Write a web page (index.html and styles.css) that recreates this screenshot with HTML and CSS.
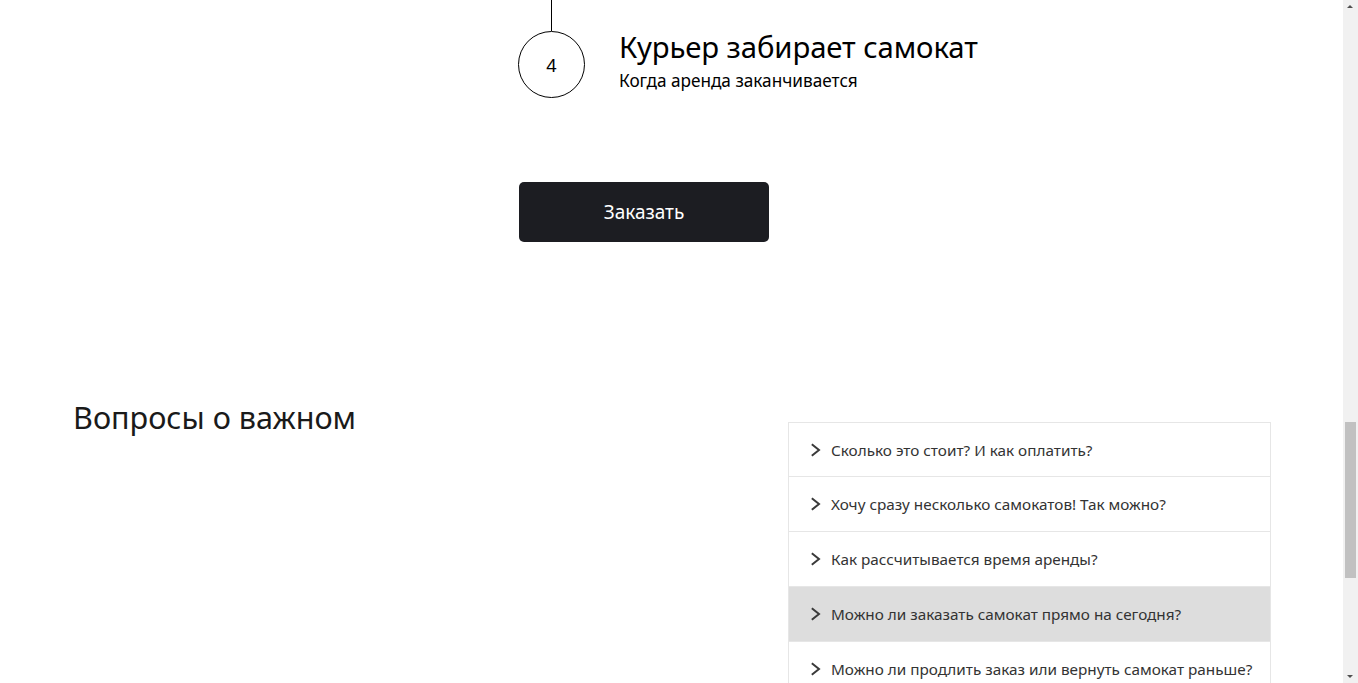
FILE: index.html
```html
<!DOCTYPE html>
<html lang="ru">
<head>
<meta charset="utf-8">
<title>Самокат</title>
<link rel="stylesheet" href="styles.css">
</head>
<body>
<div class="viewport">
  <main class="page">
    <section class="steps">
      <div class="step">
        <div class="step-marker">
          <div class="step-line"></div>
          <div class="step-circle">4</div>
        </div>
        <div class="step-text">
          <h3 class="step-title">Курьер забирает самокат</h3>
          <p class="step-desc">Когда аренда заканчивается</p>
        </div>
      </div>
      <button class="order-btn">Заказать</button>
    </section>
    <section class="faq">
      <h2 class="faq-title">Вопросы о важном</h2>
      <ul class="faq-list">
        <li class="faq-item"><svg class="chev" viewBox="0 0 11 14" width="11" height="14"><path d="M1.8 1.2 L9 7 L1.8 12.8" fill="none" stroke="#3a3a3a" stroke-width="2"/></svg><span>Сколько это стоит? И как оплатить?</span></li>
        <li class="faq-item"><svg class="chev" viewBox="0 0 11 14" width="11" height="14"><path d="M1.8 1.2 L9 7 L1.8 12.8" fill="none" stroke="#3a3a3a" stroke-width="2"/></svg><span>Хочу сразу несколько самокатов! Так можно?</span></li>
        <li class="faq-item"><svg class="chev" viewBox="0 0 11 14" width="11" height="14"><path d="M1.8 1.2 L9 7 L1.8 12.8" fill="none" stroke="#3a3a3a" stroke-width="2"/></svg><span>Как рассчитывается время аренды?</span></li>
        <li class="faq-item faq-item--hover"><svg class="chev" viewBox="0 0 11 14" width="11" height="14"><path d="M1.8 1.2 L9 7 L1.8 12.8" fill="none" stroke="#3a3a3a" stroke-width="2"/></svg><span>Можно ли заказать самокат прямо на сегодня?</span></li>
        <li class="faq-item"><svg class="chev" viewBox="0 0 11 14" width="11" height="14"><path d="M1.8 1.2 L9 7 L1.8 12.8" fill="none" stroke="#3a3a3a" stroke-width="2"/></svg><span>Можно ли продлить заказ или вернуть самокат раньше?</span></li>
      </ul>
    </section>
  </main>
  <div class="scrollbar">
    <div class="sb-arrow sb-up"></div>
    <div class="sb-track"><div class="sb-thumb"></div></div>
    <div class="sb-arrow sb-down"></div>
  </div>
</div>
</body>
</html>
```
FILE: styles.css
```css
* { box-sizing: border-box; }
html, body { margin: 0; padding: 0; height: 100%; overflow: hidden; background: #fff; }
body { font-family: "Noto Sans", "Open Sans", sans-serif; color: #000; }
.viewport { display: flex; height: 683px; }
.page { flex: 1; min-width: 0; overflow: hidden; }
.steps { padding-left: 518px; }
.step { display: flex; }
.step-marker { display: flex; flex-direction: column; align-items: center; width: 67px; }
.step-line { width: 1px; height: 31px; background: #000; }
.step-circle { width: 67px; height: 67px; border: 1px solid #000; border-radius: 50%; display: flex; align-items: center; justify-content: center; font-size: 18px; color: #000; }
.step-text { margin-left: 34px; padding-top: 29px; }
.step-title { margin: 0; font-weight: 400; font-size: 29.3px; line-height: 36px; letter-spacing: -0.1px; }
.step-desc { margin: 3px 0 0; font-size: 17.2px; line-height: 26px; }
.order-btn { display: block; margin: 84px 0 0 1px; width: 250px; height: 60px; border: 0; border-radius: 5px; background: #1c1d22; color: #fff; font-family: inherit; font-size: 19px; }
.faq { display: flex; padding: 180px 0 0 73px; }
.faq-title { margin: -25px 0 0; width: 715px; font-weight: 400; font-size: 30.6px; line-height: 40px; color: #1a1a1a; }
.faq-list { list-style: none; margin: 0; padding: 0; width: 483px; border: 1px solid #e6e6e6; border-bottom: 0; }
.faq-item { display: flex; align-items: center; height: 55px; padding-left: 21px; border-bottom: 1px solid #e6e6e6; font-size: 15.3px; color: #333; white-space: nowrap; }
.faq-item:first-child { height: 54px; }
.faq-item--hover { background: #dddddd; }
.chev { flex: none; margin-right: 10px; }
.scrollbar { width: 15px; flex: none; background: #f1f1f1; display: flex; flex-direction: column; }
.sb-arrow { height: 15px; position: relative; }
.sb-up::after, .sb-down::after { content: ""; position: absolute; left: 4px; border-left: 3.5px solid transparent; border-right: 3.5px solid transparent; }
.sb-up::after { top: 5px; border-bottom: 3px solid #505050; }
.sb-down::after { bottom: 5px; border-top: 3px solid #505050; }
.sb-track { flex: 1; padding-top: 407px; }
.sb-thumb { margin-left: 2px; width: 11px; height: 156px; background: #c1c1c1; }
```
